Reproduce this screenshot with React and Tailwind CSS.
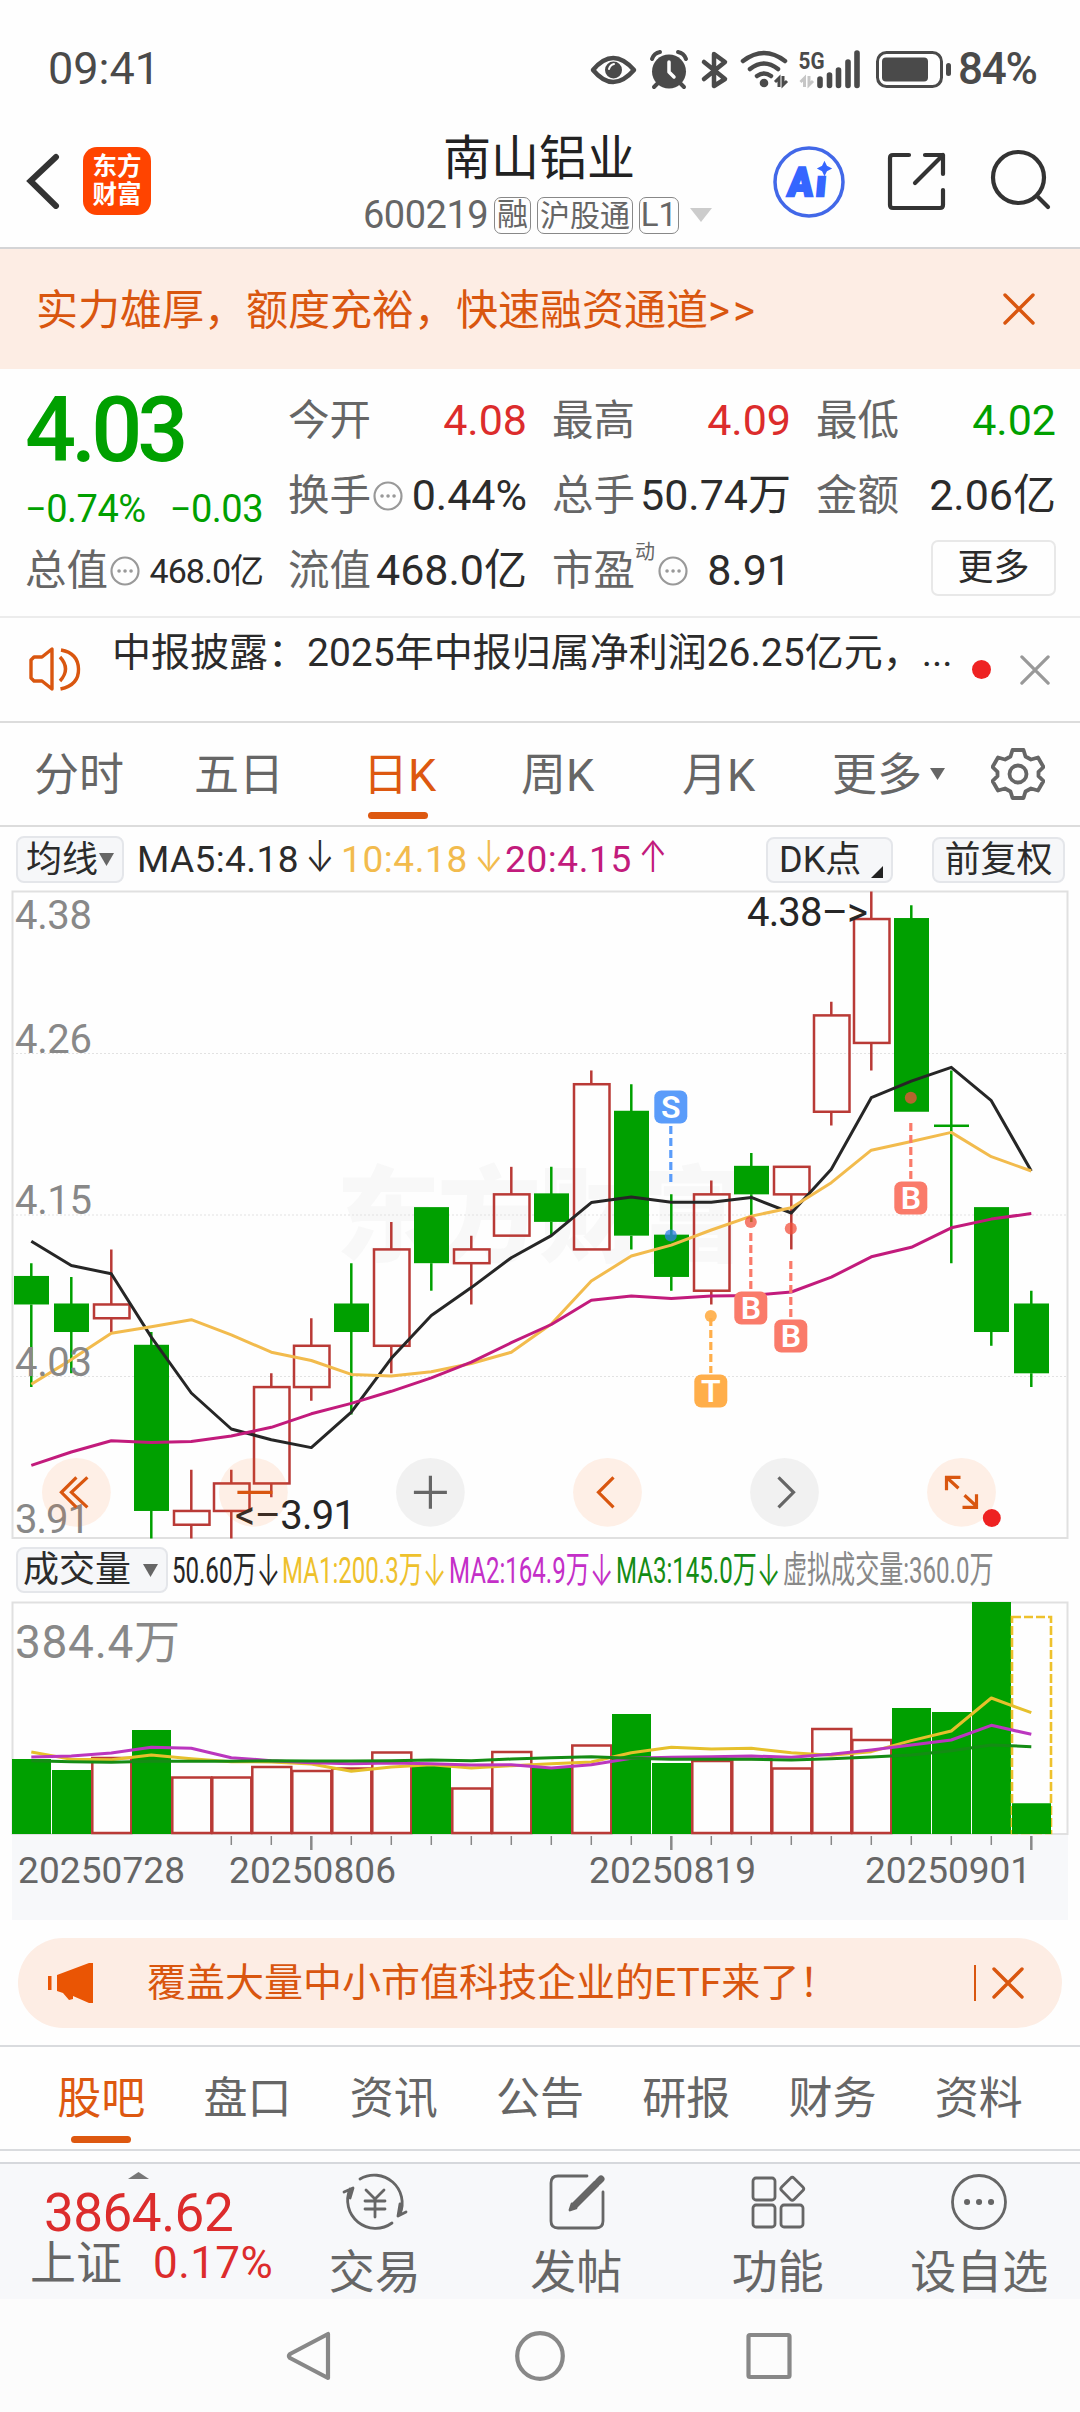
const TICK = 13.766;
const colX = (i) => 31.3 + 40 * i;
const priceY = (t) => 891.5 + t * TICK;

// [up, high, top, bottom, low] in cents below 4.38
const candles = [
  [0, 27, 28, 30, 36], [0, 28, 30, 32, 35], [1, 26, 30, 31, 32], [0, 32, 33, 45, 47],
  [1, 42, 45, 46, 47], [1, 42, 43, 45, 47], [1, 35, 36, 43, 44], [1, 31, 33, 36, 37],
  [0, 27, 30, 32, 38], [1, 24, 26, 33, 35], [0, 23, 23, 27, 29], [1, 25, 26, 27, 30],
  [1, 20, 22, 25, 25], [0, 20, 22, 24, 25], [1, 13, 14, 26, 26], [0, 14, 16, 25, 26],
  [0, 22, 25, 28, 29], [1, 21, 22, 29, 30], [0, 19, 20, 22, 24], [1, 20, 20, 22, 26],
  [1, 8, 9, 16, 17], [1, 0, 2, 11, 13], [0, 1, 2, 16, 16], [0, 13, 17, 17, 27],
  [0, 23, 23, 32, 33], [0, 29, 30, 35, 36],
];

const ma5 = [1241.2, 1265.5, 1273.8, 1337.1, 1393, 1429, 1439.8, 1447.6, 1412.1, 1358.3, 1315.4, 1287.6, 1257.7, 1235.6, 1202.6, 1197, 1202.2, 1202.2, 1197.4, 1213, 1169.2, 1097.7, 1081.2, 1067.3, 1100.7, 1171];
const ma10 = [1384.3, 1359.6, 1333.2, 1326.7, 1319.7, 1334.9, 1352.2, 1360.5, 1374.4, 1376.1, 1371.8, 1363.5, 1352.2, 1324.1, 1281.1, 1256, 1245.1, 1230, 1216.1, 1207.8, 1182.7, 1150.2, 1141.5, 1132.4, 1156.7, 1171];
const ma20 = [1465.4, 1452, 1440.7, 1442.4, 1441.6, 1436, 1427.3, 1413.8, 1403.4, 1391.3, 1377.8, 1362.2, 1342.7, 1324.5, 1300.2, 1295.9, 1298.5, 1295.9, 1295.4, 1292, 1277.2, 1256.8, 1247.3, 1227.8, 1219.1, 1213.5];

// [up, bar height]
const volumes = [
  [0, 75], [0, 64], [1, 76], [0, 104], [1, 56.5], [1, 56.5], [1, 67], [1, 63], [1, 65.5],
  [1, 81.5], [0, 68], [1, 45.5], [1, 82], [0, 66], [1, 88.5], [0, 120], [0, 71], [1, 73],
  [1, 75], [1, 65.5], [1, 105], [1, 94], [0, 126], [0, 122], [0, 232], [0, 30.5],
];
const vma1 = [636, 658, 659, 645, 656, 665, 666, 672, 694, 681, 674, 684, 677, 671, 666, 638, 622, 627, 625, 638, 646, 635, 602, 573, 474, 518];
const vma2 = [651, 648, 639, 622, 625, 653, 662, 668, 671, 669, 671, 675, 674, 684, 674, 655, 652, 650, 648, 652, 643, 630, 615, 600, 556, 583];
const vma3 = [662, 665, 667, 664, 664, 664, 662, 663, 663, 662, 660, 662, 657, 653, 650, 655, 658, 658, 658, 660, 656, 651, 645, 632, 615, 620];

const line = (ys) => ys.map((y, i) => `${colX(i)},${y}`).join(" ");
const volLine = (ys) => line(ys.map((y) => 1540 + y / 3));

const signals = [
  { i: 16, text: "S", box: 1107, dot: 1235.6, from: 1126, to: 1182, color: "#5a9cfa" },
  { i: 17, text: "T", box: 1391, dot: 1316, from: 1318, to: 1373, color: "#ffae4a" },
  { i: 18, text: "B", box: 1308, dot: 1222, from: 1233, to: 1290, color: "#fa7b6a" },
  { i: 19, text: "B", box: 1336, dot: 1228.6, from: 1261, to: 1318, color: "#fa7b6a" },
  { i: 22, text: "B", box: 1198, dot: 1097.7, from: 1123, to: 1180, color: "#fa7b6a" },
];

function StatusBar() {
  return (
    <div className="flex h-[137px] items-center pl-[48px] text-[#4a4a4a]">
      <span className="w-[542px] text-[45px] leading-none">09:41</span>
      <svg className="h-[46px] w-[362px]" viewBox="590 44 362 46" fill="none">
        <path d="M593 68q20-24 41 0q-21 24-41 0z" stroke="#4a4a4a" strokeWidth="4.5" strokeLinejoin="round" />
        <circle cx="613.5" cy="68" r="8.5" fill="#4a4a4a" />
        <path d="M609 67q1-4 5-5" stroke="#fff" strokeWidth="2" strokeLinecap="round" />
        <circle cx="669" cy="69.5" r="17" fill="#4a4a4a" />
        <path d="M652 57q2-6 8-7M686 57q-2-6-8-7M659 80l-5 5M679 80l5 5" stroke="#4a4a4a" strokeWidth="4" strokeLinecap="round" />
        <path d="M669 60v10l5 5" stroke="#fff" strokeWidth="3.5" strokeLinecap="round" strokeLinejoin="round" />
        <path d="M704 60l21 17l-11 7V52l11 8l-21 17" stroke="#4a4a4a" strokeWidth="4.5" strokeLinecap="round" strokeLinejoin="round" />
        <path d="M743 59q21-16 42 0M750 67q14-11 28 0M757 74q7-5 14 0" stroke="#4a4a4a" strokeWidth="4.5" strokeLinecap="round" />
        <circle cx="764" cy="81" r="4.3" fill="#4a4a4a" />
        <path d="M775 80l4-4v9M787 79l-4 4v-9" stroke="#4a4a4a" strokeWidth="3" />
        <text x="798.5" y="67" fontSize="24" fontWeight="700" fill="#4a4a4a" textLength="26" lengthAdjust="spacingAndGlyphs">5G</text>
        <path d="M800.5 80l4-4v9M813 79l-4 4v-9" stroke="#c6c6c6" strokeWidth="3" />
        <path d="M820 77v6.500M829.500 73v10.500M838.500 68v15.500M848 60v23.500M857 51v32.500" stroke="#4a4a4a" strokeWidth="5.600" strokeLinecap="round" />
        <rect x="877.500" y="50.500" width="64" height="34" rx="9" stroke="#4a4a4a" strokeWidth="3" />
        <rect x="882" y="55.500" width="46" height="24" rx="4" fill="#4a4a4a" />
        <rect x="946" y="61" width="5" height="13" rx="2.500" fill="#4a4a4a" />
      </svg>
      <span className="pl-[6px] text-[44px] font-medium leading-none tracking-[-1.2px]">84%</span>
    </div>
  );
}

function Header() {
  return (
    <div className="flex h-[112px] border-b-2 border-[#d4d4d6]">
      <svg className="ml-[26px] mt-[16px] h-[56px] w-[34px] shrink-0" viewBox="26 153 34 56" fill="none">
        <path d="M56 157L30.500 181L56 206" stroke="#333" strokeWidth="6" strokeLinecap="round" />
      </svg>
      <div className="ml-[23px] mt-[10px] flex h-[68px] w-[68px] shrink-0 flex-col items-center justify-center rounded-[14px] bg-[#ff4400] text-[24.500px] font-bold leading-[28px] text-white">
        <span>东方</span>
        <span>财富</span>
      </div>
      <div className="ml-[212px] w-[353px] shrink-0">
        <div className="mt-[-7px] pl-[80px] text-[48px] leading-[58px] text-[#222]">南山铝业</div>
        <div className="mt-[8px] flex h-[38px] items-center text-[#666]">
          <span className="w-[131px] text-[38px] leading-none tracking-[-0.500px]">600219</span>
          <span className="flex h-[37px] w-[37px] items-center justify-center rounded-[7px] border border-[#888] text-[31px]">融</span>
          <span className="ml-[6px] flex h-[37px] w-[96px] items-center justify-center rounded-[7px] border border-[#888] text-[30px]">沪股通</span>
          <span className="ml-[6px] flex h-[37px] w-[40px] items-center justify-center rounded-[7px] border border-[#888] text-[33px]">L1</span>
          <svg className="ml-[11px] h-[14px] w-[22px]" viewBox="0 0 22 14"><path d="M0 0h22l-11 14z" fill="#ccc" /></svg>
        </div>
      </div>
      <svg className="ml-[56px] mt-[8px] h-[74px] w-[74px] shrink-0" viewBox="771.500 144.500 74 74">
        <circle cx="808.500" cy="181.500" r="34" fill="none" stroke="#4268e8" strokeWidth="3.500" />
        <g fill="#3566ff" transform="translate(786.5 195) skewX(-5)">
          <text x="0" y="0" fontSize="40" fontWeight="900" stroke="#3566ff" strokeWidth="2.500" textLength="25" lengthAdjust="spacingAndGlyphs">A</text>
          <text x="28" y="0" fontSize="36" fontWeight="900" stroke="#3566ff" strokeWidth="2.500">ı</text>
        </g>
        <path d="M824 162l2 4l4 2l-4 2l-2 4l-2-4l-4-2l4-2z" fill="#3566ff" stroke="#3566ff" strokeWidth="1.500" />
      </svg>
      <svg className="ml-[39px] mt-[12px] h-[64px] w-[64px] shrink-0" viewBox="885 149 64 64" fill="none" stroke="#333" strokeWidth="4.200" strokeLinecap="round" strokeLinejoin="round">
        <path d="M909 155h-16q-3 0-3 3v47q0 3 3 3h47q3 0 3-3v-15M925 155h18v19M943 155l-28 28" />
      </svg>
      <svg className="ml-[40px] mt-[10px] h-[66px] w-[66px] shrink-0" viewBox="989 148 66 66" fill="none" stroke="#333" strokeWidth="4.200" strokeLinecap="round">
        <circle cx="1018.500" cy="178.500" r="25.500" />
        <path d="M1037 197l11 11" />
      </svg>
    </div>
  );
}

function Cross({ className, stroke = 3.4 }) {
  return (
    <svg className={className} viewBox="0 0 32 32" fill="none" stroke="currentColor" strokeWidth={stroke} strokeLinecap="round">
      <path d="M2 2l28 28M30 2L2 30" />
    </svg>
  );
}

function Banner() {
  return (
    <div className="flex h-[120px] items-center bg-[#fdede4] pl-[36px] text-[#d9560f]">
      <span className="w-[967px] pt-[3px] text-[42px] leading-none">
        实力雄厚，额度充裕，快速融资通道<span className="tracking-[3px]">&gt;&gt;</span>
      </span>
      <Cross className="h-[32px] w-[32px]" />
    </div>
  );
}

function Info() {
  return (
    <svg className="ml-[2px] h-[30px] w-[30px] shrink-0" viewBox="0 0 30 30" fill="none">
      <circle cx="15" cy="15" r="13.500" stroke="#999" strokeWidth="2.200" />
      <path d="M9 15h.1M15 15h.1M21 15h.1" stroke="#999" strokeWidth="3.500" strokeLinecap="round" />
    </svg>
  );
}

function Stat({ label, info, sup, value, color = "text-[#2b2b2b]", small }) {
  return (
    <div className="flex h-[75px] items-center">
      <span className="text-[41.500px] leading-none text-[#666]">{label}</span>
      {sup && <span className="mt-[-38px] w-[21px] text-[20px] leading-none text-[#666]">{sup}</span>}
      {info && <Info />}
      <span className={`ml-auto whitespace-nowrap leading-none ${small ? "text-[34px] tracking-[-1px]" : "text-[43px]"} ${color}`}>{value}</span>
    </div>
  );
}

function Quote() {
  return (
    <div className="flex h-[249px] border-b-2 border-[#ececec] pl-[25px] pt-[14px]">
      <div className="w-[238px] text-[#00a000]">
        <div className="h-[91px] pt-[2px] text-[90px] font-medium leading-[92px] tracking-[-5px]">4.03</div>
        <div className="flex h-[59px] items-center justify-between pt-[10px] text-[38px] leading-none tracking-[-0.500px]">
          <span>−0.74%</span>
          <span>−0.03</span>
        </div>
        <Stat label="总值" info value="468.0亿" small />
      </div>
      <div className="ml-[25px] w-[239px]">
        <Stat label="今开" value="4.08" color="text-[#dc2c2c]" />
        <Stat label="换手" info value="0.44%" />
        <Stat label="流值" value="468.0亿" />
      </div>
      <div className="ml-[25px] w-[239px]">
        <Stat label="最高" value="4.09" color="text-[#dc2c2c]" />
        <Stat label="总手" value="50.74万" />
        <Stat label="市盈" sup="动" info value="8.91" />
      </div>
      <div className="ml-[25px] w-[240px]">
        <Stat label="最低" value="4.02" color="text-[#00a000]" />
        <Stat label="金额" value="2.06亿" />
        <div className="ml-auto mt-[7px] flex h-[56px] w-[125px] items-center justify-center rounded-[7px] border-2 border-[#e8e8e8] text-[36px] text-[#2b2b2b]">更多</div>
      </div>
    </div>
  );
}

function News() {
  return (
    <div className="flex h-[105px] items-center border-b-2 border-[#dcdcdc]">
      <svg className="ml-[28px] mt-[-1px] h-[46px] w-[54px]" viewBox="28 647 54 46" fill="none" stroke="#d9560f" strokeWidth="3.400" strokeLinejoin="round">
        <path d="M31 661l3-3h8l10-8v40l-10-8h-8l-3-3zM60 658q11 12 0 24M61 651q17 3 17.500 19t-18 20" />
      </svg>
      <span className="-mt-[32px] ml-[30px] w-[842px] whitespace-nowrap text-[39px] leading-none text-[#2b2b2b]">中报披露：2025年中报归属净利润26.25亿元，...</span>
      <span className="ml-[18px] h-[19px] w-[19px] rounded-full bg-[#ee2222]" />
      <Cross className="ml-[29px] h-[30px] w-[30px] text-[#999]" />
    </div>
  );
}

function PeriodTabs() {
  return (
    <div className="flex h-[104px] items-center border-b-2 border-[#dcdcdc] text-[45px] leading-none text-[#666]">
      <span className="ml-[34px] w-[160px] pt-[3px]">分时</span>
      <span className="w-[169px] pt-[3px]">五日</span>
      <span className="relative w-[158px] pt-[3px] text-[#dd5810]">
        日K
        <span className="absolute left-[5px] top-[62px] h-[7px] w-[60px] rounded-full bg-[#dd5810]" />
      </span>
      <span className="w-[161px] pt-[3px]">周K</span>
      <span className="w-[150px] pt-[3px]">月K</span>
      <span className="w-[98px] pt-[3px]">更多</span>
      <svg className="h-[12px] w-[15px]" viewBox="0 0 15 12"><path d="M0 0h15l-7.500 12z" fill="#666" /></svg>
      <svg className="ml-[46px] h-[54px] w-[54px]" viewBox="-27 -27 54 54" fill="none" stroke="#666" strokeWidth="3.800" strokeLinejoin="round">
        <path d="M-5.500 -24h11l2 6.500l5.500 3l7-2l5.500 9.500l-5 4.800v4.400l5 4.800l-5.500 9.500l-7-2l-5.500 3l-2 6.500h-11l-2-6.500l-5.500-3l-7 2l-5.500-9.500l5-4.800v-4.400l-5-4.800l5.500-9.500l7 2l5.500-3z" />
        <circle r="8.500" />
      </svg>
    </div>
  );
}

function Arrow({ up }) {
  return <span className="ml-[4px] inline-block w-[22px] origin-center scale-x-[0.8] text-center text-[44px] leading-[30px] [font-family:Inter,sans-serif] font-light">{up ? "↑" : "↓"}</span>;
}

function MaLegend() {
  return (
    <div className="flex h-[63px] items-center pt-[2px] text-[37px] leading-none text-[#2b2b2b]">
      <div className="ml-[16px] flex h-[47px] w-[108px] items-center rounded-[8px] border-2 border-[#e4e6ea] bg-[#f6f7f9] pl-[8px] text-[36px]">
        均线
        <svg className="ml-[1px] h-[13px] w-[15px]" viewBox="0 0 15 13"><path d="M0 0h15l-7.500 13z" fill="#666" /></svg>
      </div>
      <span className="ml-[13px] w-[204px] whitespace-nowrap tracking-[0.400px]">MA5:4.18<Arrow /></span>
      <span className="w-[164px] whitespace-nowrap tracking-[0.600px] text-[#f2bb4d]">10:4.18<Arrow /></span>
      <span className="w-[261px] whitespace-nowrap tracking-[0.600px] text-[#c21b7c]">20:4.15<Arrow up /></span>
      <div className="flex h-[46px] w-[127px] items-center rounded-[8px] border-2 border-[#e4e6ea] bg-[#f6f7f9] pl-[11px] text-[36px]">
        DK点
        <svg className="ml-[10px] mt-[24px] h-[12px] w-[12px]" viewBox="0 0 12 12"><path d="M12 0v12H0z" fill="#222" /></svg>
      </div>
      <div className="ml-[39px] flex h-[46px] w-[133px] items-center justify-center rounded-[8px] border-2 border-[#e4e6ea] bg-[#f6f7f9] text-[36px]">前复权</div>
    </div>
  );
}

function RoundButton({ x, orange, children }) {
  return (
    <g>
      <circle cx={x} cy="1492.300" r="34.400" fill={orange ? "#ff6a10" : "#000"} fillOpacity={orange ? 0.1 : 0.05} />
      <g transform={`translate(${x} 1492.300)`} fill="none" stroke={orange ? "#d9560f" : "#666"} strokeWidth="3.200">{children}</g>
    </g>
  );
}

function CandleChart() {
  return (
    <svg className="block h-[649px] w-[1080px]" viewBox="0 890 1080 649">
      <text x="336" y="1254" fontSize="104" fontWeight="900" fill="#f8f8f8" textLength="408">东方财富</text>
      <g stroke="#e2e2e2" strokeWidth="1.200" strokeDasharray="2 2">
        <path d="M12 1053.500H1067M12 1215H1067M12 1376.500H1067" />
      </g>
      <rect x="12.500" y="891.500" width="1055" height="646.500" fill="none" stroke="#e0e0e0" strokeWidth="2" />
      {candles.map(([up, hi, top, bot, lo], i) => {
        const x = colX(i);
        const c = up ? "#b93a36" : "#00a000";
        return (
          <g key={i} stroke={c} strokeWidth="2.500">
            <path d={`M${x} ${priceY(hi)}V${priceY(top)}M${x} ${priceY(bot)}V${priceY(lo)}`} />
            {up ? (
              <rect x={x - 17.300} y={priceY(top)} width="35.500" height={priceY(bot) - priceY(top)} fill="none" />
            ) : (
              <rect x={x - 17.300} y={priceY(top) - 1} width="35" height={Math.max(priceY(bot) - priceY(top) + 1, 2.500)} fill={c} stroke="none" />
            )}
          </g>
        );
      })}
      <g fill="none" strokeWidth="3" strokeLinejoin="round">
        <polyline points={line(ma5)} stroke="#262626" />
        <polyline points={line(ma10)} stroke="#f2bb4d" />
        <polyline points={line(ma20)} stroke="#c21b7c" />
      </g>
      {signals.map((s) => (
        <g key={s.i}>
          <circle cx={colX(s.i) - 0.500} cy={s.dot} r="6" fill={s.text === "B" ? "#f2503c" : s.text === "T" ? "#ff9c20" : "#2f7fe8"} fillOpacity="0.750" />
          <path d={`M${colX(s.i) - 0.500} ${s.from}V${s.to}`} stroke={s.color} strokeWidth="3.200" strokeDasharray="8 4" />
          <rect x={colX(s.i) - 17} y={s.box - 16.500} width="33" height="33" rx="7" fill={s.color} />
          <text x={colX(s.i) - 0.500} y={s.box + 11} fontSize="32" fontWeight="600" fill="#fff" textAnchor="middle">{s.text}</text>
        </g>
      ))}
      <g fontSize="40" fill="#888">
        <text x="15" y="928.500" textLength="77">4.38</text>
        <text x="15" y="1052.500" textLength="77">4.26</text>
        <text x="15" y="1214" textLength="77">4.15</text>
        <text x="15" y="1376" textLength="77">4.03</text>
        <text x="15" y="1533" textLength="75">3.91</text>
      </g>
      <g fontSize="40" fill="#262626">
        <text x="747" y="926" textLength="121">4.38–&gt;</text>
        <text x="235" y="1529" textLength="121">&lt;–3.91</text>
      </g>
      <RoundButton x={76.400} orange><path d="M0 -15L-15 0L0 15M11 -15L-5 0L11 15" /></RoundButton>
      <RoundButton x={253.400} orange><path d="M-16 0H19" /></RoundButton>
      <RoundButton x={430.400}><path d="M-16.500 0H16.500M0 -16.500V16.500" /></RoundButton>
      <RoundButton x={607.500} orange><path d="M6 -15L-9 0L6 15" /></RoundButton>
      <RoundButton x={784.500}><path d="M-6 -15L9 0L-6 15" /></RoundButton>
      <RoundButton x={961.500} orange><path d="M-15 -2V-15H-1M-15 -15L-3 -4M3 3L15 14M15 2V15H1" /></RoundButton>
      <circle cx="991.800" cy="1518" r="9" fill="#ee2222" />
    </svg>
  );
}

function Squeezed({ className, children, arrow }) {
  return (
    <div className={className}>
      <div className="flex w-max origin-left scale-x-[0.650] items-center">
        {children}
        {arrow && <span className="w-[32px] text-center text-[44px] leading-[30px] [font-family:Inter,sans-serif] font-light">↓</span>}
      </div>
    </div>
  );
}

function VolumeLegend() {
  return (
    <div className="flex h-[62px] items-center text-[37px] leading-none">
      <div className="ml-[16px] flex h-[46px] w-[152px] shrink-0 items-center rounded-[8px] border-2 border-[#e4e6ea] bg-[#f6f7f9] pl-[5px] text-[36px] text-[#2b2b2b]">
        成交量
        <svg className="ml-[12px] h-[13px] w-[15px]" viewBox="0 0 15 13"><path d="M0 0h15l-7.500 13z" fill="#666" /></svg>
      </div>
      <Squeezed className="ml-[4px] w-[110px] shrink-0 text-[#262626]" arrow>50.60万</Squeezed>
      <Squeezed className="w-[167px] shrink-0 text-[#eec12c]" arrow>MA1:200.3万</Squeezed>
      <Squeezed className="w-[167px] shrink-0 text-[#c42fc8]" arrow>MA2:164.9万</Squeezed>
      <Squeezed className="w-[167px] shrink-0 text-[#148c14]" arrow>MA3:145.0万</Squeezed>
      <Squeezed className="w-[210px] shrink-0 text-[#888]">虚拟成交量:360.0万</Squeezed>
    </div>
  );
}

function VolumeChart() {
  return (
    <svg className="block h-[320px] w-[1080px]" viewBox="0 1601 1080 320">
      <rect x="12" y="1835" width="1056" height="85" fill="#f7f8fa" />
      <rect x="12.500" y="1602.500" width="1055" height="231.500" fill="none" stroke="#e0e0e0" strokeWidth="2" />
      <text x="15" y="1658" fontSize="46" fill="#888" textLength="165">384.4万</text>
      {volumes.map(([up, h], i) =>
        up ? (
          <rect key={i} x={colX(i) - 19} y={1834 - h} width="39" height={h - 1} fill="none" stroke="#b93a36" strokeWidth="2.500" />
        ) : (
          <rect key={i} x={colX(i) - 19.300} y={1834 - h} width="39" height={h} fill="#00a000" />
        )
      )}
      <rect x="1012" y="1617" width="39" height="216" fill="none" stroke="#eec12c" strokeWidth="2.600" strokeDasharray="9 3" />
      <rect x="1012" y="1803.500" width="39" height="30.500" fill="#00a000" />
      <g fill="none" strokeWidth="3" strokeLinejoin="round">
        <polyline points={volLine(vma1)} stroke="#e6c02c" />
        <polyline points={volLine(vma2)} stroke="#bb36bf" />
        <polyline points={volLine(vma3)} stroke="#148c14" />
      </g>
      {volumes.map((_, i) => {
        if (i < 5) return null;
        const major = i === 7 || i === 16 || i === 25;
        return <path key={i} d={`M${colX(i)} 1836V${major ? 1850 : 1845}`} stroke="#888" strokeWidth={major ? 2.5 : 1.5} />;
      })}
      <g fontSize="37" fill="#666">
        <text x="18" y="1883" textLength="167">20250728</text>
        <text x="229" y="1883" textLength="167">20250806</text>
        <text x="589" y="1883" textLength="167">20250819</text>
        <text x="865" y="1883" textLength="166">20250901</text>
      </g>
    </svg>
  );
}

function AdPill() {
  return (
    <div className="mx-[18px] mt-[17px] flex h-[90px] items-center rounded-full bg-[#fdede4] text-[#d9560f]">
      <svg className="ml-[30px] h-[40px] w-[46px] shrink-0" viewBox="48 1963 46 40" fill="#ea5504">
        <path d="M48 1976h3.500v14h-3.500zM57 1975l32-12h4v40h-4l-16-7v3l-4 1l-6-7l-6-2z" />
      </svg>
      <span className="ml-[53px] w-[827px] shrink-0 whitespace-nowrap text-[39px] leading-none">覆盖大量中小市值科技企业的ETF来了！</span>
      <span className="h-[36px] w-[2px] shrink-0 bg-[#d9560f]" />
      <Cross className="ml-[16px] h-[32px] w-[32px] shrink-0" />
    </div>
  );
}

const sections = ["股吧", "盘口", "资讯", "公告", "研报", "财务", "资料"];

function SectionTabs() {
  return (
    <div className="mt-[17px] grid h-[106px] grid-cols-7 items-center border-y-2 border-[#d9dbde] px-[28px] text-center text-[44px] leading-none text-[#666]">
      {sections.map((s, i) => (
        <span key={s} className={i === 0 ? "relative pt-[2px] text-[#dd5810]" : "pt-[2px]"}>
          {s}
          {i === 0 && <span className="absolute left-[43px] top-[61px] h-[7px] w-[60px] rounded-full bg-[#dd5810]" />}
        </span>
      ))}
    </div>
  );
}

function Action({ label, children }) {
  return (
    <div className="flex flex-1 flex-col items-center">
      <svg className="mt-[6px] h-[64px] w-[68px]" viewBox="-34 -32 68 64" fill="none" stroke="#666" strokeWidth="2.800" strokeLinecap="round" strokeLinejoin="round">
        {children}
      </svg>
      <span className="mt-[15px] text-[46px] leading-none">{label}</span>
    </div>
  );
}

function BottomBar() {
  return (
    <div className="mt-[11px] flex h-[137px] border-t-2 border-[#d6d8dc] bg-[#f7f8fa] text-[#666]">
      <div className="w-[274px]">
        <svg className="ml-[128px] mt-[8px] block h-[7px] w-[21px]" viewBox="0 0 21 7"><path d="M0 7h21l-10.500-7z" fill="#777" /></svg>
        <div className="mt-[7px] pl-[44px] text-[53px] leading-[54px] tracking-[-0.500px] text-[#dc2c2c]">3864.62</div>
        <div className="flex items-center pl-[30px] text-[46px] leading-[46px]">
          上证
          <span className="ml-[31px] text-[44px] tracking-[0.400px] text-[#dc2c2c]">0.17%</span>
        </div>
      </div>
      <div className="flex flex-1">
        <Action label="交易">
          <path d="M-15 -23A28 28 0 0 1 25 12M17 21A28 28 0 0 1 -25 -13M-31 -10l9-4l-3 10M31 10l-8 4l2-12M-9 -12l9 9l9-9M0 -3V15M-10 -1H10M-10 7H10" />
        </Action>
        <Action label="发帖">
          <path d="M11 -26h-29q-7 0-7 7v38q0 7 7 7h38q7 0 7-7v-29" />
          <path d="M21 -19L-2 4" strokeWidth="7" strokeLinecap="butt" />
          <path d="M-6 8l2-6l4 4z" fill="#666" />
          <path d="M22.500 -20.500l2.500-2.500" strokeWidth="7" />
        </Action>
        <Action label="功能">
          <rect x="-25" y="-24" width="22" height="22" rx="3" />
          <rect x="-25" y="3" width="22" height="22" rx="3" />
          <rect x="3" y="3" width="22" height="22" rx="3" />
          <rect x="5.500" y="-22" width="17.500" height="17.500" rx="2.500" transform="rotate(45 14.200 -13.200)" />
        </Action>
        <Action label="设自选">
          <circle r="26.500" />
          <path d="M-12 0h.1M0 0h.1M12 0h.1" strokeWidth="6" />
        </Action>
      </div>
    </div>
  );
}

function NavBar() {
  return (
    <div className="flex h-[114px] items-center bg-[#fcfcfc]">
      <svg className="block h-[56px] w-full" viewBox="0 2327 1080 56" fill="none" stroke="#888" strokeWidth="4.200" strokeLinejoin="round">
        <path d="M328 2333v44l-38-20q-2-2 0-4z" />
        <circle cx="540" cy="2355" r="22.800" />
        <rect x="748.500" y="2334" width="41" height="42" rx="1.500" />
      </svg>
    </div>
  );
}

export default function App() {
  return (
    <div lang="zh-CN" className="h-[2412px] w-[1080px] overflow-hidden bg-[#fefefe] [font-family:Roboto,'Noto_Sans_CJK_SC',sans-serif]">
      <StatusBar />
      <Header />
      <Banner />
      <Quote />
      <News />
      <PeriodTabs />
      <MaLegend />
      <CandleChart />
      <VolumeLegend />
      <VolumeChart />
      <AdPill />
      <SectionTabs />
      <BottomBar />
      <NavBar />
    </div>
  );
}
